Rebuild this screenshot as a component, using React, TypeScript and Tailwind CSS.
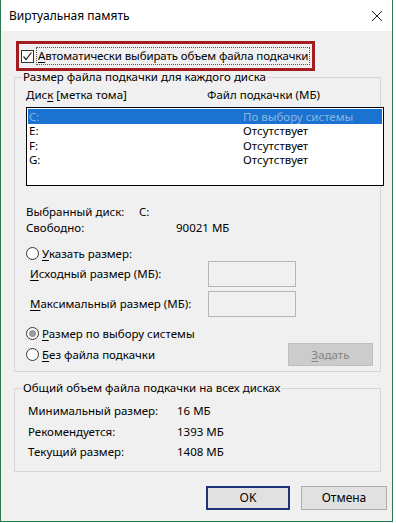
import React from 'react';

const font = { fontFamily: '"Noto Sans", "Open Sans", sans-serif' };

const Radio = ({ checked }: { checked?: boolean }) => (
  <span className="w-[13px] h-[13px] rounded-full border border-[#333] bg-white flex items-center justify-center shrink-0">
    {checked && <span className="w-[7px] h-[7px] rounded-full bg-[#9a9a9a]" />}
  </span>
);

const U = ({ children }: { children: React.ReactNode }) => <span className="underline underline-offset-2">{children}</span>;

const Row = ({ label, value, h }: { label: string; value: string; h: string }) => (
  <div className={`flex items-center ${h}`}>
    <span className="w-[149px]">{label}</span>
    <span>{value}</span>
  </div>
);

export default function App() {
  const disks = [
    { d: 'C:', v: 'По выбору системы', sel: true },
    { d: 'E:', v: 'Отсутствует' },
    { d: 'F:', v: 'Отсутствует' },
    { d: 'G:', v: 'Отсутствует' },
  ];

  return (
    <div className="w-[396px] h-[523px] bg-white text-[11.5px] text-black leading-none whitespace-nowrap" style={font}>
      <div className="w-[393px] h-[522px] border-x border-b border-[#2a7a50] flex flex-col">
        {/* title bar */}
        <div className="h-[31px] bg-white flex items-center justify-between pl-[8px] pr-[8px] shrink-0">
          <span className="text-[12px]">Виртуальная память</span>
          <svg width="12" height="12" viewBox="0 0 12 12" className="mr-[1px]">
            <path d="M1 1 L11 11 M11 1 L1 11" stroke="#222" strokeWidth="1" />
          </svg>
        </div>

        <div className="flex-1 bg-[#f0f0f0] flex flex-col">
          {/* auto checkbox, highlighted */}
          <div className="mt-[10px] ml-[15px] w-[299px] h-[30px] border-[3px] border-[#a51b1f] flex items-center pl-[2px]">
            <span className="w-[13px] h-[13px] border border-[#333] bg-white flex items-center justify-center shrink-0">
              <svg width="11" height="11" viewBox="0 0 11 11">
                <path d="M1.5 5.5 L4 8.5 L9.5 1.5" fill="none" stroke="#222" strokeWidth="1.2" />
              </svg>
            </span>
            <span className="ml-[2px] px-[1px] py-[2px] border border-dotted border-[#555] tracking-[-0.12px]">
              <U>А</U>втоматически выбирать объем файла подкачки
            </span>
          </div>

          {/* per-disk group */}
          <fieldset className="ml-[13px] w-[367px] min-w-0 h-[301px] border border-[#d5d5d5]">
            <legend className="leading-[12px] px-[1px] ml-[7px]">Размер файла подкачки для каждого диска</legend>
            <div className="pl-[11px]">
              <div className="flex items-center h-[16px] mt-[4px]">
                <span className="w-[181px]">Дис<U>к</U> [метка тома]</span>
                <span>Файл подкачки (МБ)</span>
              </div>
              <div className="mt-[4px] w-[358px] h-[79px] border border-black bg-white pt-[1px] px-[1px]">
                {disks.map((x) => (
                  <div key={x.d} className={`flex items-center h-[14.5px] pl-[1px] ${x.sel ? 'bg-[#1a73d0] text-[#8fb3df]' : ''}`}>
                    <span className="w-[214px]">{x.d}</span>
                    <span>{x.v}</span>
                  </div>
                ))}
              </div>

              <div className="mt-[18px] flex items-center h-[15px]">
                <span className="w-[113px]">Выбранный диск:</span>
                <span>C:</span>
              </div>
              <div className="flex items-center h-[17px]">
                <span className="w-[150px]">Свободно:</span>
                <span>90021 МБ</span>
              </div>

              <div className="mt-[11px] flex items-center h-[13px] gap-[3px]">
                <Radio />
                <span><U>У</U>казать размер:</span>
              </div>
              <div className="mt-[1px] flex items-center h-[26px]">
                <span className="w-[182px] pl-[4px]"><U>И</U>сходный размер (МБ):</span>
                <span className="w-[88px] h-[26px] border border-[#b5b5b5] bg-[#f0f0f0]" />
              </div>
              <div className="mt-[4px] flex items-center h-[26px]">
                <span className="w-[182px] pl-[4px]"><U>М</U>аксимальный размер (МБ):</span>
                <span className="w-[88px] h-[26px] border border-[#b5b5b5] bg-[#f0f0f0]" />
              </div>

              <div className="mt-[10px] flex items-center h-[13px] gap-[3px]">
                <Radio checked />
                <span><U>Р</U>азмер по выбору системы</span>
              </div>
              <div className="mt-[3px] flex items-center justify-between h-[23px] pr-[7px]">
                <div className="flex items-center gap-[3px]">
                  <Radio />
                  <span><U>Б</U>ез файла подкачки</span>
                </div>
                <span className="w-[85px] h-[23px] border border-[#bfbfbf] bg-[#cccccc] text-[#838383] flex items-center justify-center">
                  <span><U>З</U>адать</span>
                </span>
              </div>
            </div>
          </fieldset>

          {/* totals group */}
          <fieldset className="mt-[10px] ml-[13px] w-[367px] min-w-0 h-[90px] border border-[#d5d5d5]">
            <legend className="leading-[12px] px-[1px] ml-[7px]">Общий объем файла подкачки на всех дисках</legend>
            <div className="pl-[13px] pt-[7px]">
              <Row label="Минимальный размер:" value="16 МБ" h="h-[20px]" />
              <Row label="Рекомендуется:" value="1393 МБ" h="h-[21px]" />
              <Row label="Текущий размер:" value="1408 МБ" h="h-[20px]" />
            </div>
          </fieldset>

          {/* buttons */}
          <div className="mt-[14px] flex gap-[11px] pl-[205px]">
            <button className="w-[84px] h-[24px] border-2 border-[#1b3276] bg-[#e1e1e1] text-[12px]">OK</button>
            <button className="w-[86px] h-[24px] border border-[#adadad] bg-[#e1e1e1] text-[12px]">Отмена</button>
          </div>
        </div>
      </div>
    </div>
  );
}
